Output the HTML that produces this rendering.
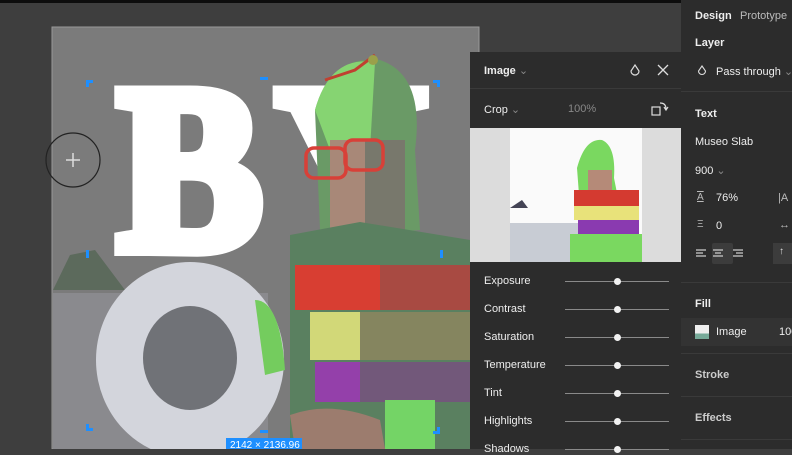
<!DOCTYPE html>
<html><head><meta charset="utf-8"><style>
*{margin:0;padding:0;box-sizing:border-box}
body{width:792px;height:449px;overflow:hidden;background:#3e3e3e;font-family:"Liberation Sans",sans-serif;position:relative;color:#eee}
.a{position:absolute}
.t{position:absolute;font-size:11px;white-space:nowrap}
.b{font-weight:bold}
.trk{position:absolute;left:565px;width:104px;height:1px;background:#8a8a8a}
.kn{position:absolute;left:614px;width:7px;height:7px;border-radius:50%;background:#f2f2f2}
.sep{position:absolute;height:1px;background:#3a3a3a}
</style></head><body>
<div class="a" style="left:0;top:0;width:792px;height:3px;background:#0d0d0d"></div>
<svg class="a" style="left:0;top:0" width="792" height="449">
<rect x="52" y="27" width="427" height="422" fill="#7b7b7b" stroke="#9a9a9a" stroke-width="1"/>
<path d="M53 290 L70 255 L95 250 L110 270 L125 290 Z" fill="#5c6a5c"/>
<rect x="53" y="293" width="215" height="156" fill="#8a8a8e"/>
<g font-family="Liberation Serif" font-weight="bold" font-size="236" fill="#fff" stroke="#fff" stroke-width="16" stroke-linejoin="miter">
<text x="118" y="248" textLength="144" lengthAdjust="spacingAndGlyphs">B</text>
<text x="276" y="248" textLength="150" lengthAdjust="spacingAndGlyphs">Y</text>
</g>
<ellipse cx="190" cy="360" rx="94" ry="98" fill="#d3d5dc"/>
<ellipse cx="190" cy="358" rx="47" ry="52" fill="#707277"/>
<path d="M315 110 Q330 55 380 60 Q425 75 415 150 L420 230 L360 235 L320 230 Z" fill="#6a9a66"/>
<path d="M315 110 Q330 55 375 62 L370 150 L330 150 Z" fill="#86d472"/>
<rect x="330" y="140" width="55" height="90" fill="#a88878"/>
<rect x="365" y="140" width="40" height="90" fill="#78786c"/>
<rect x="306" y="148" width="40" height="30" rx="8" fill="none" stroke="#d84038" stroke-width="3.5"/>
<rect x="345" y="140" width="38" height="30" rx="8" fill="none" stroke="#d84038" stroke-width="3.5"/>
<path d="M325 80 L355 70 L375 55" stroke="#c04030" stroke-width="3" fill="none"/>
<circle cx="373" cy="60" r="5" fill="#9aa04a"/>
<path d="M290 235 L360 222 L470 240 L470 449 L290 449 Z" fill="#5a8060"/>
<rect x="295" y="265" width="175" height="45" fill="#a84a42"/>
<rect x="295" y="265" width="85" height="45" fill="#d83e32"/>
<rect x="310" y="312" width="160" height="48" fill="#85855f"/>
<rect x="310" y="312" width="50" height="48" fill="#d2d878"/>
<rect x="315" y="362" width="155" height="40" fill="#72587a"/>
<rect x="315" y="362" width="45" height="40" fill="#9440aa"/>
<path d="M255 300 Q280 300 285 370 L265 375 Z" fill="#74cc5e"/>
<rect x="385" y="400" width="50" height="49" fill="#74d466"/>
<path d="M290 415 Q330 400 380 420 L385 449 L295 449 Z" fill="#9c7c6e"/>
<g fill="#1e8fff">
<path d="M86 80 h7 v3 h-4 v4 h-3z"/><path d="M260 77 h8 v3 h-8z"/><path d="M433 80 h7 v7 h-3 v-4 h-4z"/>
<rect x="86" y="250" width="3" height="8"/><rect x="440" y="250" width="3" height="8"/>
<path d="M86 424 h3 v4 h4 v3 h-7z"/><path d="M433 431 h4 v-4 h3 v7 h-7z"/><rect x="260" y="430" width="8" height="3"/>
</g>
<rect x="226" y="438" width="76" height="11" fill="#1e8fff"/>
<text x="230" y="448" font-size="10" fill="#fff" font-family="Liberation Sans">2142 × 2136.96</text>
<circle cx="73" cy="160" r="27" fill="none" stroke="#222" stroke-width="1.2"/>
<path d="M73 153 v14 M66 160 h14" stroke="#ddd" stroke-width="1.5"/>
</svg>

<div class="a" style="left:470px;top:52px;width:211px;height:397px;background:#2c2c2c"></div>
<div class="sep" style="left:470px;top:88px;width:211px"></div>
<div class="t b" style="left:484px;top:64px">Image <span style="color:#888;font-weight:normal">⌄</span></div>
<svg class="a" style="left:628px;top:63px" width="45" height="14"><path d="M7 2 L11 8 A4 4 0 1 1 3 8 Z" fill="none" stroke="#ddd" stroke-width="1.2"/><path d="M30 2 L40 12 M40 2 L30 12" stroke="#ddd" stroke-width="1.3"/></svg>
<div class="t" style="left:484px;top:103px">Crop <span style="color:#888">⌄</span></div>
<div class="t" style="left:568px;top:103px;color:#888">100%</div>
<svg class="a" style="left:650px;top:100px" width="20" height="18"><rect x="2" y="7" width="8" height="8" fill="none" stroke="#ddd" stroke-width="1.2"/><path d="M10 3 Q16 3 16 9 M14 7 L16 10 L18 7" fill="none" stroke="#ddd" stroke-width="1.2"/></svg>
<svg class="a" style="left:470px;top:128px" width="211" height="134">
<rect width="211" height="134" fill="#dcdcdc"/>
<rect x="40" y="0" width="132" height="134" fill="#fafafa"/>
<rect x="40" y="95" width="70" height="39" fill="#c8ccd4"/>
<path d="M40 80 l12 -8 l6 8z" fill="#445"/>
<path d="M107 40 Q115 10 132 12 Q146 18 144 50 L150 80 L110 80 Z" fill="#7ad860"/>
<rect x="118" y="42" width="24" height="30" fill="#b58a78"/>
<rect x="104" y="62" width="65" height="16" fill="#d43a30"/>
<rect x="104" y="78" width="65" height="14" fill="#e8e27a"/>
<rect x="108" y="92" width="61" height="14" fill="#8a3ab0"/>
<rect x="100" y="106" width="72" height="28" fill="#7ad860"/>
</svg>
<div class="t" style="left:484px;top:275px">Exposure</div>
<div class="t" style="left:484px;top:303px">Contrast</div>
<div class="t" style="left:484px;top:331px">Saturation</div>
<div class="t" style="left:484px;top:359px">Temperature</div>
<div class="t" style="left:484px;top:387px">Tint</div>
<div class="t" style="left:484px;top:415px">Highlights</div>
<div class="t" style="left:484px;top:443px">Shadows</div>
<div class="trk" style="top:281px"></div><div class="kn" style="top:278px"></div>
<div class="trk" style="top:309px"></div><div class="kn" style="top:306px"></div>
<div class="trk" style="top:337px"></div><div class="kn" style="top:334px"></div>
<div class="trk" style="top:365px"></div><div class="kn" style="top:362px"></div>
<div class="trk" style="top:393px"></div><div class="kn" style="top:390px"></div>
<div class="trk" style="top:421px"></div><div class="kn" style="top:418px"></div>
<div class="trk" style="top:449px"></div><div class="kn" style="top:446px"></div>

<div class="a" style="left:681px;top:0;width:111px;height:449px;background:#2c2c2c"></div>
<div class="t b" style="left:695px;top:10px">Design</div>
<div class="t" style="left:740px;top:10px;color:#bbb">Prototype</div>
<div class="t b" style="left:695px;top:37px">Layer</div>
<svg class="a" style="left:697px;top:65px" width="10" height="12"><path d="M5 1 L8.5 6 A3.5 3.5 0 1 1 1.5 6 Z" fill="none" stroke="#ddd" stroke-width="1.1"/></svg>
<div class="t" style="left:716px;top:65px">Pass through <span style="color:#888">⌄</span></div>
<div class="sep" style="left:681px;top:91px;width:111px"></div>
<div class="t b" style="left:695px;top:108px">Text</div>
<div class="t" style="left:695px;top:136px">Museo Slab</div>
<div class="t" style="left:695px;top:164px">900 <span style="color:#888">⌄</span></div>
<div class="t" style="left:697px;top:192px;color:#bbb;font-size:10px;text-decoration:underline overline">A</div>
<div class="t" style="left:716px;top:192px">76%</div>
<div class="t" style="left:778px;top:192px;color:#bbb">|A</div>
<div class="t" style="left:697px;top:219px;color:#bbb;font-size:10px">Ξ</div>
<div class="t" style="left:716px;top:220px">0</div>
<div class="t" style="left:779px;top:219px;color:#bbb">↔</div>
<div class="a" style="left:712px;top:243px;width:21px;height:21px;background:#3c3c3c;border-radius:2px"></div>
<svg class="a" style="left:695px;top:248px" width="60" height="12"><g stroke="#ccc" stroke-width="1.2"><path d="M1 2h10M1 5h7M1 8h10"/><path d="M18 2h10M20 5h6M18 8h10"/><path d="M38 2h10M41 5h7M38 8h10"/></g></svg>
<div class="a" style="left:773px;top:243px;width:19px;height:21px;background:#3c3c3c"></div>
<div class="t" style="left:779px;top:246px;color:#ddd;font-size:10px">↑</div>
<div class="sep" style="left:681px;top:282px;width:111px"></div>
<div class="t b" style="left:695px;top:298px">Fill</div>
<div class="a" style="left:681px;top:318px;width:111px;height:28px;background:#333"></div>
<div class="a" style="left:695px;top:325px;width:14px;height:14px;background:linear-gradient(#eee 60%,#7a9 60%)"></div>
<div class="t" style="left:716px;top:326px">Image</div>
<div class="t" style="left:779px;top:326px">100</div>
<div class="sep" style="left:681px;top:353px;width:111px"></div>
<div class="t b" style="left:695px;top:369px;color:#ccc">Stroke</div>
<div class="sep" style="left:681px;top:396px;width:111px"></div>
<div class="t b" style="left:695px;top:412px;color:#ccc">Effects</div>
<div class="sep" style="left:681px;top:439px;width:111px"></div>
</body></html>
